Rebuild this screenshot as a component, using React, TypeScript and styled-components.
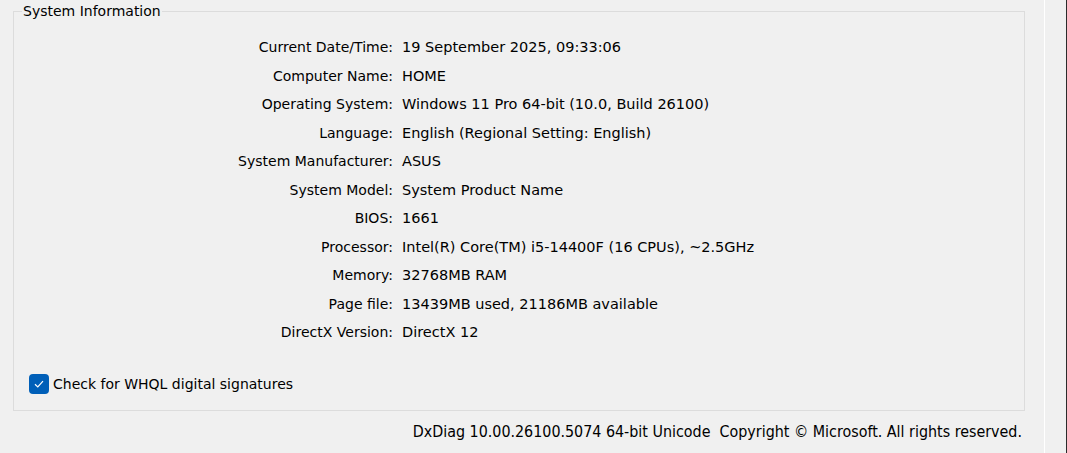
import styled, { createGlobalStyle } from 'styled-components';

const GlobalStyle = createGlobalStyle`
  html, body {
    margin: 0;
    padding: 0;
    background: #f0f0f0;
  }
  body {
    font-family: "DejaVu Sans", "Segoe UI", sans-serif;
    font-size: 14.5px;
    color: #000;
  }
`;

const rows: [string, string][] = [
  ['Current Date/Time:', '19 September 2025, 09:33:06'],
  ['Computer Name:', 'HOME'],
  ['Operating System:', 'Windows 11 Pro 64-bit (10.0, Build 26100)'],
  ['Language:', 'English (Regional Setting: English)'],
  ['System Manufacturer:', 'ASUS'],
  ['System Model:', 'System Product Name'],
  ['BIOS:', '1661'],
  ['Processor:', 'Intel(R) Core(TM) i5-14400F (16 CPUs), ~2.5GHz'],
  ['Memory:', '32768MB RAM'],
  ['Page file:', '13439MB used, 21186MB available'],
  ['DirectX Version:', 'DirectX 12'],
];

const App = () => {
  return (
    <>
      <GlobalStyle />
      <Window>
        <Main>
          <Group>
            <Legend>System Information</Legend>
            <InfoGrid>
              {rows.map(([label, value]) => (
                <Row key={label}>
                  <Label>{label}</Label>
                  <Value>{value}</Value>
                </Row>
              ))}
            </InfoGrid>
            <CheckRow>
              <CheckBox>
                <svg width="12" height="12" viewBox="0 0 12 12">
                  <path d="M2 6.3 L4.8 9 L10 3.2" fill="none" stroke="#fff" strokeWidth="1.2" />
                </svg>
              </CheckBox>
              <span>Check for WHQL digital signatures</span>
            </CheckRow>
          </Group>
          <Footer>DxDiag 10.00.26100.5074 64-bit Unicode&nbsp;&nbsp;Copyright © Microsoft. All rights reserved.</Footer>
        </Main>
        <Strip />
      </Window>
    </>
  );
};

export default App;

const Window = styled.div`
  display: flex;
  height: 453px;
  overflow: hidden;
`;

const Main = styled.div`
  width: 1044px;
  padding-left: 13px;
  box-sizing: border-box;
  display: flex;
  flex-direction: column;
`;

const Group = styled.fieldset`
  margin: 0;
  padding: 0 0 16px 0;
  width: 1012px;
  box-sizing: border-box;
  border: 1px solid #dcdcdc;
`;

const Legend = styled.legend`
  margin-left: 8px;
  padding: 0 1px;
  font-size: 14px;
  line-height: 22px;
`;

const InfoGrid = styled.div`
  display: flex;
  flex-direction: column;
  margin-top: 11px;
`;

const Row = styled.div`
  display: grid;
  grid-template-columns: 379px 1fr;
  column-gap: 9px;
  height: 28.5px;
  align-items: center;
`;

const Label = styled.span`
  text-align: right;
  white-space: nowrap;
  font-size: 14px;
`;

const Value = styled.span`
  white-space: nowrap;
`;

const CheckRow = styled.label`
  display: flex;
  align-items: center;
  gap: 4px;
  margin-top: 27px;
  padding-left: 15px;
  height: 20px;
  font-size: 14px;
`;

const CheckBox = styled.span`
  width: 20px;
  height: 20px;
  border-radius: 4px;
  background: #005fb8;
  display: flex;
  align-items: center;
  justify-content: center;
`;

const Footer = styled.div`
  display: flex;
  justify-content: flex-end;
  padding-right: 22px;
  margin-top: 9px;
  line-height: 24px;
  font-family: "DejaVu Sans Condensed", "Liberation Sans Narrow", sans-serif;
  font-stretch: condensed;
  font-size: 15.9px;
  white-space: nowrap;
`;

const Strip = styled.div`
  flex: 1;
  border-left: 1px solid #ffffff;
  border-right: 1px solid #2b2b2b;
`;
